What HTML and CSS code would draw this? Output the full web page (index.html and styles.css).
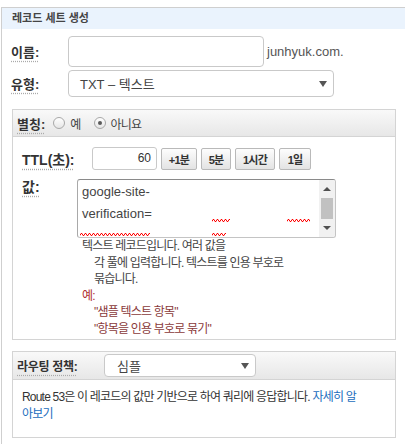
FILE: index.html
```html
<!DOCTYPE html>
<html lang="ko">
<head>
<meta charset="utf-8">
<title>레코드 세트 생성</title>
<link rel="stylesheet" href="styles.css">
</head>
<body>
<svg class="defs" width="0" height="0" aria-hidden="true">
  <defs>
    <pattern id="wave" width="4" height="3" patternUnits="userSpaceOnUse">
      <path d="M0 2.5 L1 0.5 L2 0.5 L3 2.5 L4 2.5" fill="none" stroke="#ff0000" stroke-width="1"/>
    </pattern>
  </defs>
</svg>
<div class="wrap">
  <div class="wrap-head">레코드 세트 생성</div>
  <div class="wrap-body">
    <div class="row row-name">
      <span class="lbl row-lbl">이름:</span>
      <div class="field name-input"></div>
      <span class="suffix">junhyuk.com.</span>
    </div>
    <div class="row row-type">
      <span class="lbl row-lbl">유형:</span>
      <div class="field select type-select"><span class="sel-text">TXT – 텍스트</span><span class="caret"></span></div>
    </div>

    <div class="panel panel-alias">
      <div class="panel-head">
        <span class="lbl">별칭:</span>
        <span class="radio"></span><span class="rlabel">예</span>
        <span class="radio radio-2 checked"></span><span class="rlabel">아니요</span>
      </div>
      <div class="panel-body">
        <div class="ttl-row">
          <span class="lbl lbl-lg ttl-lbl">TTL(초):</span>
          <div class="field ttl-input">60</div>
          <div class="btns">
            <span class="btn btn-a">+1분</span>
            <span class="btn btn-b">5분</span>
            <span class="btn btn-c">1시간</span>
            <span class="btn btn-d">1일</span>
          </div>
        </div>
        <div class="val-row">
          <span class="lbl lbl-lg val-lbl">값:</span>
          <div class="val-col">
            <div class="ta">
              <div class="ta-text">
                <div class="ta-line">google-site-</div>
                <div class="ta-line">verification=<svg class="sq sq1" height="3"><rect width="100%" height="3" fill="url(#wave)"/></svg><svg class="sq sq2" height="3"><rect width="100%" height="3" fill="url(#wave)"/></svg></div>
                <div class="ta-line"><svg class="sq sq3" height="3"><rect width="100%" height="3" fill="url(#wave)"/></svg><svg class="sq sq4" height="3"><rect width="100%" height="3" fill="url(#wave)"/></svg></div>
              </div>
              <div class="sb">
                <div class="sb-btn"><span class="tri-up"></span></div>
                <div class="sb-track"><div class="sb-thumb"></div></div>
                <div class="sb-btn"><span class="tri-down"></span></div>
              </div>
            </div>
            <div class="help">
              <div>텍스트 레코드입니다. 여러 값을</div>
              <div class="ind">각 풀에 입력합니다. 텍스트를 인용 부호로</div>
              <div class="ind">묶습니다.</div>
              <div class="ex">예:</div>
              <div class="ind ex-item">"샘플 텍스트 항목"</div>
              <div class="ind ex-item">"항목을 인용 부호로 묶기"</div>
            </div>
          </div>
        </div>
      </div>
    </div>

    <div class="panel panel-routing">
      <div class="panel-head routing-head">
        <span class="lbl routing-lbl">라우팅 정책:</span>
        <div class="field select routing-select"><span class="sel-text">심플</span><span class="caret"></span></div>
      </div>
      <div class="panel-body routing-body">
        Route 53은 이 레코드의 값만 기반으로 하여 쿼리에 응답합니다. <a class="link" href="#">자세히 알<br>아보기</a>
      </div>
    </div>
  </div>
</div>
</body>
</html>
```

FILE: styles.css
```css
* { box-sizing: border-box; }

html, body {
  margin: 0;
  padding: 0;
  width: 405px;
  height: 444px;
  overflow: hidden;
  background: #ffffff;
}

body {
  font-family: "Liberation Sans", Arial, "Noto Sans CJK KR", sans-serif;
  font-size: 12px;
  color: #333333;
}

.defs { position: absolute; width: 0; height: 0; }

.wrap {
  margin: 7px 0 0 1px;
  width: 404px;
  height: 437px;
  overflow: hidden;
  border-top: 1px solid #cfcfcf;
  border-left: 1px solid #cfcfcf;
}

.wrap-head {
  height: 21px;
  line-height: 21px;
  background: #eaf3fd;
  padding-left: 10px;
  font-size: 11px;
  font-weight: bold;
  color: #444444;
}

.wrap-body { padding: 7px 0 0 9px; }

.row { display: flex; align-items: center; }
.row-name { height: 31px; }
.row-type { height: 27px; margin-top: 3px; }

.lbl {
  font-weight: bold;
  font-size: 13px;
  color: #333333;
  text-decoration: underline dotted #aaaaaa;
  text-underline-offset: 4px;
  white-space: nowrap;
}
.lbl-lg { font-size: 14px; }
.row-lbl { width: 57px; flex: none; }

.field {
  border: 1px solid #c9c9c9;
  background: #ffffff;
}

.name-input {
  width: 196px;
  height: 31px;
  border-radius: 4px;
}

.suffix {
  margin-left: 3px;
  font-size: 13px;
  color: #555555;
}

.select {
  display: flex;
  align-items: center;
  border-radius: 4px;
}
.sel-text { flex: 1; color: #444444; white-space: nowrap; }
.caret {
  width: 0;
  height: 0;
  border-left: 4px solid transparent;
  border-right: 4px solid transparent;
  border-top: 6px solid #555555;
  margin-right: 6px;
}

.type-select {
  width: 266px;
  height: 27px;
  padding-left: 11px;
  font-size: 13px;
}

.panel {
  margin-left: 1px;
  width: 384px;
  border: 1px solid #d4d4d4;
}
.panel-alias { margin-top: 12px; }
.panel-routing { margin-top: 11px; }

.panel-head {
  height: 27px;
  display: flex;
  align-items: center;
  padding-left: 4px;
  background: linear-gradient(#f9f9f9, #e7e7e7);
  border-bottom: 1px solid #d4d4d4;
}

.radio {
  width: 12px;
  height: 12px;
  margin-left: 8px;
  border-radius: 50%;
  border: 1px solid #a8a8a8;
  background: linear-gradient(#ffffff, #e6e6e6);
  display: flex;
  align-items: center;
  justify-content: center;
}
.radio-2 { margin-left: 13px; }
.radio.checked::after {
  content: "";
  width: 4px;
  height: 4px;
  border-radius: 50%;
  background: #5a5a5a;
}
.rlabel {
  margin-left: 5px;
  font-size: 12px;
  color: #444444;
  letter-spacing: -0.8px;
}

.panel-body { padding: 10px 0 2px 9px; }

.ttl-row {
  display: flex;
  align-items: center;
  height: 23px;
}
.ttl-lbl { width: 70px; flex: none; }
.ttl-input {
  width: 65px;
  height: 23px;
  border-radius: 3px;
  text-align: right;
  padding-right: 5px;
  line-height: 21px;
  font-size: 12px;
  color: #333333;
}
.btns {
  display: flex;
  gap: 4px;
  margin-left: 4px;
}
.btn {
  height: 22px;
  display: flex;
  align-items: center;
  justify-content: center;
  border: 1px solid #b9b9b9;
  border-radius: 2px;
  background: linear-gradient(#fdfdfd, #e3e3e3);
  font-size: 11px;
  font-weight: bold;
  letter-spacing: -0.8px;
  color: #333333;
}
.btn-a { width: 36px; }
.btn-b { width: 30px; }
.btn-c { width: 40px; }
.btn-d { width: 32px; }

.val-row {
  display: flex;
  margin-top: 9px;
}
.val-lbl { width: 55px; flex: none; line-height: 16px; }
.val-col { display: flex; flex-direction: column; }

.ta {
  width: 259px;
  height: 59px;
  display: flex;
  border: 1px solid #c4c4c4;
  border-top-color: #8a8a8a;
  border-left-color: #a9a9a9;
  border-radius: 3px;
  overflow: hidden;
}
.ta-text {
  flex: 1;
  padding: 1px 0 0 4px;
  font-size: 13px;
  line-height: 22px;
  color: #444444;
  white-space: nowrap;
  overflow: hidden;
}
.ta-line { height: 22px; }
.sq { display: inline-block; vertical-align: -4px; }
.sq1 { width: 18px; margin-left: 60px; }
.sq2 { width: 23px; margin-left: 57px; }
.sq3, .sq4 { vertical-align: 4px; }
.sq3 { width: 70px; margin-left: -2px; }
.sq4 { width: 14px; margin-left: 62px; }

.sb {
  width: 16px;
  flex: none;
  background: #f1f1f1;
  display: flex;
  flex-direction: column;
}
.sb-btn {
  height: 18px;
  display: flex;
  align-items: center;
  justify-content: center;
}
.sb-track { height: 21px; padding: 0 2px; }
.sb-thumb { height: 21px; background: #c1c1c1; }
.tri-up {
  width: 0; height: 0;
  border-left: 4px solid transparent;
  border-right: 4px solid transparent;
  border-bottom: 4px solid #505050;
}
.tri-down {
  width: 0; height: 0;
  border-left: 4px solid transparent;
  border-right: 4px solid transparent;
  border-top: 4px solid #505050;
}

.help {
  padding-left: 5px;
  font-size: 12px;
  line-height: 16.5px;
  letter-spacing: -0.8px;
  color: #444444;
  white-space: nowrap;
}
.ind { padding-left: 12px; }
.ex { color: #b03030; }
.ex-item { color: #8a3a3a; }

.routing-head { height: 28px; }
.routing-lbl { width: 87px; flex: none; font-size: 12px; letter-spacing: -0.3px; }
.routing-select {
  width: 152px;
  height: 23px;
  padding-left: 12px;
  font-size: 13px;
}

.routing-body {
  padding: 9px 0 14px 9px;
  font-size: 12px;
  line-height: 17px;
  letter-spacing: -0.8px;
  color: #333333;
  white-space: nowrap;
}
.link { color: #1a6dbd; text-decoration: none; }
```
